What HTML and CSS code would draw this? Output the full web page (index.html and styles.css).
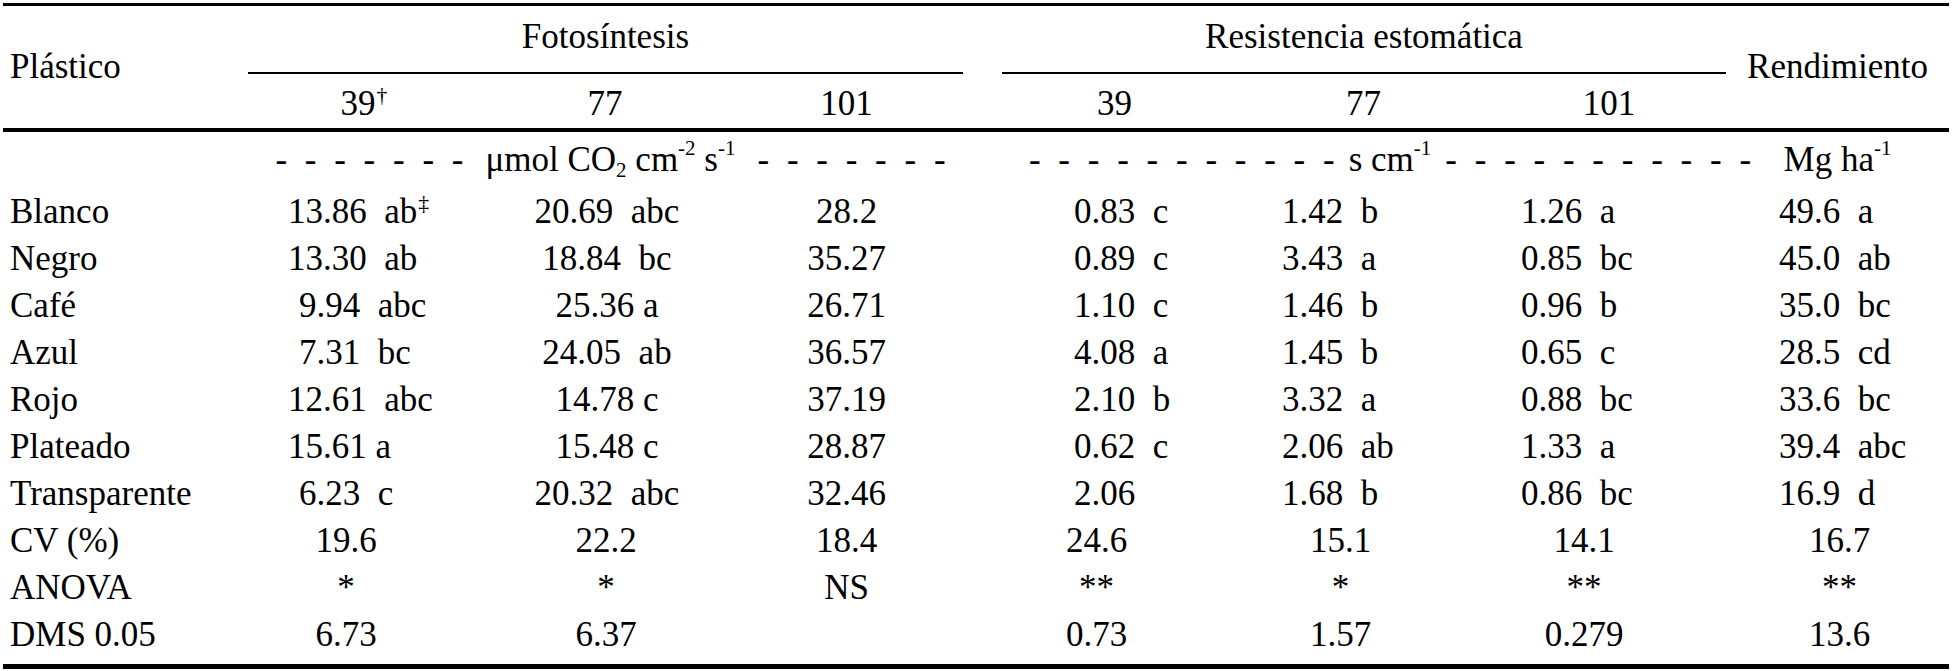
FILE: index.html
```html
<!DOCTYPE html>
<html lang="es">
<head>
<meta charset="utf-8">
<title>Cuadro</title>
<link rel="stylesheet" href="styles.css">
</head>
<body>
<div class="tbl">
  <div class="head">
    <div class="h-plast"><span>Plástico</span></div>
    <div class="h-group g-foto"><span>Fotosíntesis</span></div>
    <div class="h-group g-res"><span>Resistencia estomática</span></div>
    <div class="h-rend"><span>Rendimiento</span></div>
    <div class="h-sub s1"><span>39<sup class="dag">†</sup></span></div>
    <div class="h-sub s2"><span>77</span></div>
    <div class="h-sub s3"><span>101</span></div>
    <div class="h-sub s5"><span>39</span></div>
    <div class="h-sub s6"><span>77</span></div>
    <div class="h-sub s7"><span>101</span></div>
  </div>
  <div class="body">
    <div class="row units">
      <div class="cell lab"></div>
      <div class="u-foto"><span class="dashes">- - - - - - -</span><span class="utext">μmol CO<sub>2</sub> cm<sup>-2</sup> s<sup>-1</sup></span><span class="dashes">- - - - - - -</span></div>
      <div class="cell gap"></div>
      <div class="u-res"><span class="dashes">- - - - - - - - - - -</span><span class="utext">s cm<sup>-1</sup></span><span class="dashes">- - - - - - - - - - -</span></div>
      <div class="u-mg"><span>Mg ha<sup>-1</sup></span></div>
    </div>

    <div class="row">
      <div class="cell lab">Blanco</div>
      <div class="cell c1">13.86  ab<sup class="dag">‡</sup></div>
      <div class="cell c2">20.69  abc</div>
      <div class="cell c3">28.2</div>
      <div class="cell gap"></div>
      <div class="cell c5">0.83  c</div>
      <div class="cell c6">1.42  b</div>
      <div class="cell c7">1.26  a</div>
      <div class="cell c8">49.6  a</div>
    </div>
    <div class="row">
      <div class="cell lab">Negro</div>
      <div class="cell c1">13.30  ab</div>
      <div class="cell c2">18.84  bc</div>
      <div class="cell c3">35.27</div>
      <div class="cell gap"></div>
      <div class="cell c5">0.89  c</div>
      <div class="cell c6">3.43  a</div>
      <div class="cell c7">0.85  bc</div>
      <div class="cell c8">45.0  ab</div>
    </div>
    <div class="row">
      <div class="cell lab">Café</div>
      <div class="cell c1 one">9.94  abc</div>
      <div class="cell c2">25.36 a</div>
      <div class="cell c3">26.71</div>
      <div class="cell gap"></div>
      <div class="cell c5">1.10  c</div>
      <div class="cell c6">1.46  b</div>
      <div class="cell c7">0.96  b</div>
      <div class="cell c8">35.0  bc</div>
    </div>
    <div class="row">
      <div class="cell lab">Azul</div>
      <div class="cell c1 one">7.31  bc</div>
      <div class="cell c2">24.05  ab</div>
      <div class="cell c3">36.57</div>
      <div class="cell gap"></div>
      <div class="cell c5">4.08  a</div>
      <div class="cell c6">1.45  b</div>
      <div class="cell c7">0.65  c</div>
      <div class="cell c8">28.5  cd</div>
    </div>
    <div class="row">
      <div class="cell lab">Rojo</div>
      <div class="cell c1">12.61  abc</div>
      <div class="cell c2">14.78 c</div>
      <div class="cell c3">37.19</div>
      <div class="cell gap"></div>
      <div class="cell c5">2.10  b</div>
      <div class="cell c6">3.32  a</div>
      <div class="cell c7">0.88  bc</div>
      <div class="cell c8">33.6  bc</div>
    </div>
    <div class="row">
      <div class="cell lab">Plateado</div>
      <div class="cell c1">15.61 a</div>
      <div class="cell c2">15.48 c</div>
      <div class="cell c3">28.87</div>
      <div class="cell gap"></div>
      <div class="cell c5">0.62  c</div>
      <div class="cell c6">2.06  ab</div>
      <div class="cell c7">1.33  a</div>
      <div class="cell c8">39.4  abc</div>
    </div>
    <div class="row">
      <div class="cell lab">Transparente</div>
      <div class="cell c1 one">6.23  c</div>
      <div class="cell c2">20.32  abc</div>
      <div class="cell c3">32.46</div>
      <div class="cell gap"></div>
      <div class="cell c5">2.06</div>
      <div class="cell c6">1.68  b</div>
      <div class="cell c7">0.86  bc</div>
      <div class="cell c8">16.9  d</div>
    </div>
    <div class="row stat">
      <div class="cell lab">CV (%)</div>
      <div class="cell c1">19.6</div>
      <div class="cell c2">22.2</div>
      <div class="cell c3">18.4</div>
      <div class="cell gap"></div>
      <div class="cell c5">24.6</div>
      <div class="cell c6">15.1</div>
      <div class="cell c7">14.1</div>
      <div class="cell c8">16.7</div>
    </div>
    <div class="row stat">
      <div class="cell lab">ANOVA</div>
      <div class="cell c1">*</div>
      <div class="cell c2">*</div>
      <div class="cell c3">NS</div>
      <div class="cell gap"></div>
      <div class="cell c5">**</div>
      <div class="cell c6">*</div>
      <div class="cell c7">**</div>
      <div class="cell c8">**</div>
    </div>
    <div class="row stat">
      <div class="cell lab">DMS 0.05</div>
      <div class="cell c1">6.73</div>
      <div class="cell c2">6.37</div>
      <div class="cell c3"></div>
      <div class="cell gap"></div>
      <div class="cell c5">0.73</div>
      <div class="cell c6">1.57</div>
      <div class="cell c7">0.279</div>
      <div class="cell c8">13.6</div>
    </div>
  </div>
</div>
</body>
</html>
```

FILE: styles.css
```css
:root {
  --cols: 245px 238px 238px 239px 39px 241px 241px 242px 223px;
}

html, body {
  margin: 0;
  padding: 0;
  background: #fff;
}

body {
  font-family: "Liberation Serif", "Times New Roman", serif;
  font-size: 35px;
  color: #000;
}

.tbl {
  margin: 3px 3px 0 3px;
  width: 1946px;
}

sup, sub {
  font-size: 0.6em;
  line-height: 0;
}

sup {
  vertical-align: 0.75em;
}

sub {
  vertical-align: -0.3em;
}

sup.dag {
  font-size: 0.62em;
  vertical-align: 0.6em;
  margin-left: 1px;
}

/* ---------- header ---------- */
.head {
  display: grid;
  grid-template-columns: var(--cols);
  grid-template-rows: 68px 54px;
  border-top: 3px solid #000;
  border-bottom: 4px solid #000;
}

.h-plast {
  grid-column: 1;
  grid-row: 1 / 3;
  display: flex;
  align-items: center;
  padding-left: 7px;
}

.h-rend {
  grid-column: 9;
  grid-row: 1 / 3;
  display: flex;
  align-items: center;
  justify-content: center;
}

.h-group {
  grid-row: 1;
  border-bottom: 2px solid #000;
  display: flex;
  align-items: center;
  justify-content: center;
  padding-bottom: 4px;
}

.g-foto { grid-column: 2 / 5; }
.g-res { grid-column: 6 / 9; }

.h-sub {
  grid-row: 2;
  display: flex;
  align-items: center;
  justify-content: center;
  padding-top: 6px;
}

.s1 { grid-column: 2; padding-right: 6px; }
.s2 { grid-column: 3; }
.s3 { grid-column: 4; padding-left: 6px; }
.s5 { grid-column: 6; padding-right: 16px; }
.s6 { grid-column: 7; }
.s7 { grid-column: 8; padding-left: 8px; }

/* ---------- body ---------- */
.body {
  display: grid;
  grid-template-columns: var(--cols);
  grid-template-rows: 56px repeat(10, 47px);
  padding-bottom: 6px;
  border-bottom: 5px solid #000;
}

.row {
  display: contents;
}

.cell {
  line-height: 47px;
  white-space: pre;
}

.lab {
  padding-left: 7px;
}

.units > div {
  display: flex;
  align-items: center;
  white-space: pre;
}

.u-foto {
  grid-column: 2 / 5;
  justify-content: center;
  padding-left: 10px;
}

.u-res {
  grid-column: 6 / 9;
  justify-content: center;
  padding-left: 52px;
}

.u-mg {
  grid-column: 9;
  justify-content: center;
}

.dashes {
  word-spacing: 9px;
}

.u-foto .utext {
  margin: 0 22px;
}

.u-res .utext {
  margin: 0 14px;
}

/* data columns */
.c1 { padding-left: 40px; }
.c1.one { padding-left: 51px; }
.c2 { text-align: center; padding-left: 4px; }
.c3 { text-align: center; padding-left: 6px; }
.c5 { padding-left: 72px; }
.c6 { padding-left: 39px; }
.c7 { padding-left: 37px; }
.c8 { padding-left: 53px; }

/* statistic rows: centred values */
.stat .c1 { padding: 0 42px 0 0; text-align: center; }
.stat .c2 { padding: 0 0 0 2px; text-align: center; }
.stat .c3 { padding: 0 0 0 6px; text-align: center; }
.stat .c5 { padding: 0 52px 0 0; text-align: center; }
.stat .c6 { padding: 0 46px 0 0; text-align: center; }
.stat .c7 { padding: 0 42px 0 0; text-align: center; }
.stat .c8 { padding: 0 0 0 4px; text-align: center; }
```
